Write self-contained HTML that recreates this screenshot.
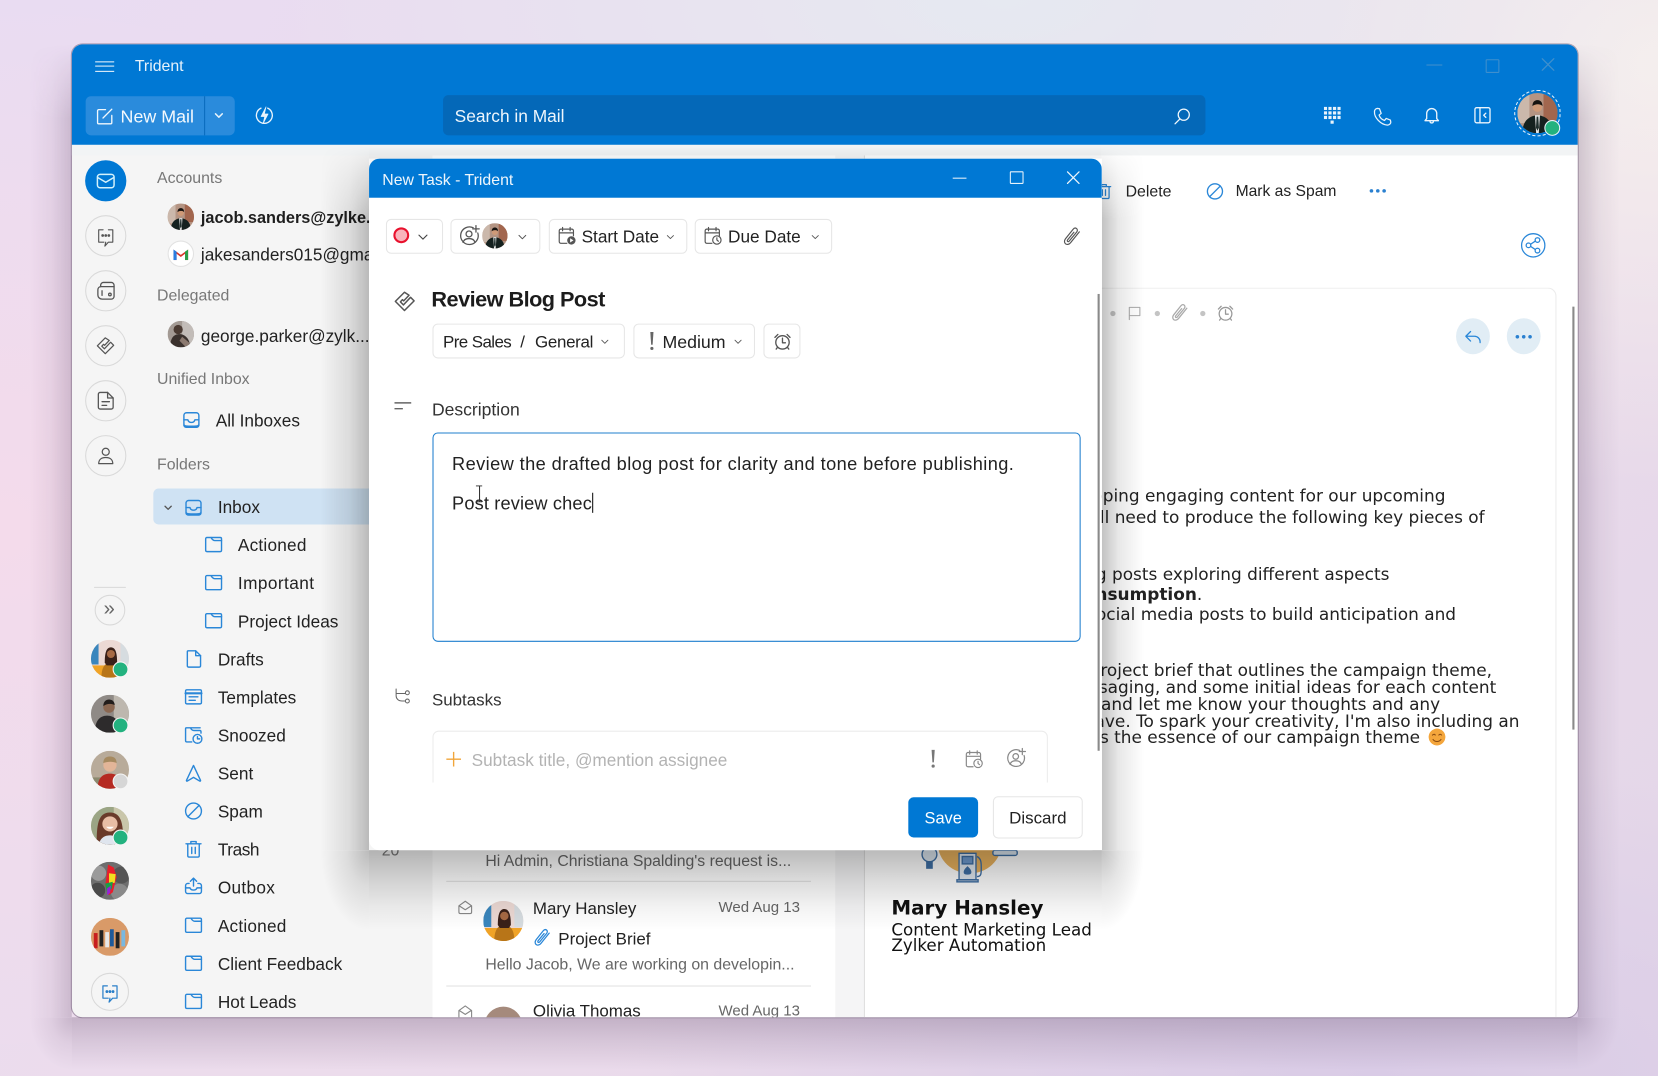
<!DOCTYPE html>
<html lang="en">
<head>
<meta charset="utf-8">
<title>Trident</title>
<style>
html,body{margin:0;padding:0;width:1658px;height:1076px;overflow:hidden;background:#eadff0}
#s{position:absolute;left:0;top:0;width:1568px;height:1018px;transform:scale(1.0574);transform-origin:0 0;overflow:hidden;font-family:"Liberation Sans",sans-serif;color:#222;
background:
radial-gradient(600px 500px at 0 500px,#f4dbeb 0,rgba(244,219,235,0) 100%),
radial-gradient(700px 300px at 950px 0,#e6e9f1 0,rgba(230,233,241,0) 100%),
radial-gradient(500px 400px at 1568px 60px,#f6efed 0,rgba(246,239,237,0) 100%),
radial-gradient(700px 300px at 1300px 1018px,#d9cbe6 0,rgba(217,203,230,0) 100%),
linear-gradient(135deg,#e9dcf2 0,#ecdcec 50%,#e3d6e8 100%)}
.t{position:absolute;white-space:nowrap;transform:translateY(-50%);line-height:1.2}
.i{position:absolute;transform:translate(-50%,-50%);fill:none;stroke:currentColor;stroke-width:1.6;stroke-linecap:round;stroke-linejoin:round;overflow:visible}
.a{position:absolute;transform:translate(-50%,-50%);border-radius:50%;overflow:hidden;display:block}
.c{position:absolute;transform:translate(-50%,-50%);border-radius:50%;border:1px solid #d9d9d9;box-sizing:border-box}
.d{position:absolute;transform:translate(-50%,-50%);border-radius:50%;width:13px;height:13px;background:#23b27f;border:1px solid #f5f5f5;box-sizing:content-box}
.g{position:absolute}
.o{position:absolute;z-index:4}
.fade-top{-webkit-mask-image:linear-gradient(to bottom,transparent,#000 70px);mask-image:linear-gradient(to bottom,transparent,#000 70px)}
.fade-x{-webkit-mask-image:linear-gradient(to right,transparent,#000 60px,#000 calc(100% - 60px),transparent);mask-image:linear-gradient(to right,transparent,#000 60px,#000 calc(100% - 60px),transparent)}
#win{position:absolute;left:68px;top:42px;width:1424px;height:920px;border-radius:10px;overflow:hidden;background:#f5f5f5;outline:1px solid rgba(90,70,100,.45);outline-offset:-.5px}
#in{position:absolute;left:-68px;top:-42px;width:1568px;height:1018px}
.f{font-size:16.3px;color:#222}
.h{font-size:15px;color:#777}
.b{color:#2a87d8}
.chip{position:absolute;box-sizing:border-box;border:1px solid #e6e6e6;border-radius:5px;background:#fff}
#modal{position:absolute;left:349px;top:150px;width:693px;height:654px;border-radius:10px;background:#fff;z-index:5;overflow:hidden}
#m{position:absolute;left:-349px;top:-150px;width:1568px;height:1018px}
.e{position:absolute;white-space:nowrap;transform:translateY(-50%);font-family:"DejaVu Sans",sans-serif;font-size:16px;color:#222;text-align:right}
</style>
</head>
<body>
<svg width="0" height="0" style="position:absolute">
<defs>
<symbol id="mail" viewBox="0 0 24 24"><rect x="3" y="5" width="18" height="14.500" rx="3"/><path d="M3.500 8.500l8.500 5 8.500-5"/></symbol>
<symbol id="chat" viewBox="0 0 24 24"><path d="M9 4H4v14h6M15 4h5v14h-5l-4 4.500 1-4.500"/><circle cx="8.500" cy="10.500" r=".9" fill="currentColor"/><circle cx="12" cy="10.500" r=".9" fill="currentColor"/><circle cx="15.500" cy="10.500" r=".9" fill="currentColor"/></symbol>
<symbol id="cal" viewBox="0 0 24 24"><path d="M6.500 7V6a3 3 0 0 1 3-3H18a3 3 0 0 1 3 3v12a3 3 0 0 1-3 3H8a4.500 4.500 0 0 1-4.500-4.500V11a3.500 3.500 0 0 1 3-3.500z"/><path d="M6.500 7.500H21M8 12v5"/><circle cx="16.500" cy="16" r="1.400"/></symbol>
<symbol id="task" viewBox="0 0 24 24"><path d="M11.500 3L2.500 12l9 9 9.500-9.500-3.500-3.500-7 7.500-3-3 2-2.200 1.200 1.200 5.300-5.500z"/></symbol>
<symbol id="note" viewBox="0 0 24 24"><path d="M6 3h8l6 6v10a2 2 0 0 1-2 2H6a2 2 0 0 1-2-2V5a2 2 0 0 1 2-2z"/><path d="M14 3v6h6M8 13h8M8 17h5"/></symbol>
<symbol id="user" viewBox="0 0 24 24"><circle cx="12" cy="7.500" r="4"/><path d="M4 21c0-5 3.500-7 8-7s8 2 8 7z"/></symbol>
<symbol id="inbox" viewBox="0 0 24 24"><path d="M6.500 4h11a3 3 0 0 1 3 3v11a2.500 2.500 0 0 1-2.500 2.500H6A2.500 2.500 0 0 1 3.500 18V7a3 3 0 0 1 3-3z"/><path d="M3.500 12H8c.5 2 2 3 4 3s3.500-1 4-3h4.500"/><path d="M4 18.500c1 1.500 15 1.500 16 0" stroke-width="2.200"/></symbol>
<symbol id="folder" viewBox="0 0 24 24"><path d="M3 5.500A1.500 1.500 0 0 1 4.500 4H9c1.500 2.500 2.500 3.500 4.500 3.500H21v11a1.500 1.500 0 0 1-1.500 1.500h-15A1.500 1.500 0 0 1 3 18.500z"/><path d="M9.500 4h10A1.500 1.500 0 0 1 21 5.500v2"/></symbol>
<symbol id="draft" viewBox="0 0 24 24"><path d="M6 3h8.500L20 8.500V20a1.500 1.500 0 0 1-1.500 1.500h-12A1.500 1.500 0 0 1 5 20V4a1 1 0 0 1 1-1z"/><path d="M14.500 3v5.500H20"/></symbol>
<symbol id="tpl" viewBox="0 0 24 24"><rect x="3" y="4" width="18" height="16" rx="1.500"/><path d="M3 8h18" stroke-width="2.500"/><path d="M7 12h10M7 16h7"/></symbol>
<symbol id="snooze" viewBox="0 0 24 24"><path d="M10 20H4.500A1.500 1.500 0 0 1 3 18.500V5a1 1 0 0 1 1-1h4.500c1 2 2 3 4 3H19a1.500 1.500 0 0 1 1.500 1.500V10M9 4h10.500"/><circle cx="16.500" cy="16.500" r="5"/><path d="M16.500 14v2.500h2.500"/></symbol>
<symbol id="sent" viewBox="0 0 24 24"><path d="M12 3.500L4 20.500c0 .5.500 1 1 .7L12 17l7 4.200c.5.300 1-.2 1-.7z"/></symbol>
<symbol id="spam" viewBox="0 0 24 24"><circle cx="12" cy="12" r="9"/><path d="M5.500 18.500L18.500 5.500"/></symbol>
<symbol id="trash" viewBox="0 0 24 24"><path d="M3.500 6h17M9 6V3.500h6V6M5.500 6v13.500a1.500 1.500 0 0 0 1.500 1.500h10a1.500 1.500 0 0 0 1.500-1.500V6M10 10v7M14 10v7"/></symbol>
<symbol id="outbox" viewBox="0 0 24 24"><path d="M7 9H5.500A2.500 2.500 0 0 0 3 11.500V18a2.500 2.500 0 0 0 2.500 2.500h13A2.500 2.500 0 0 0 21 18v-6.500A2.500 2.500 0 0 0 18.500 9H17"/><path d="M3 14h5c.5 1.500 2 2.500 4 2.500s3.500-1 4-2.500h5M12 12V3M8.500 6.500L12 3l3.500 3.500"/></symbol>
<symbol id="chev" viewBox="0 0 24 24"><path d="M5 9l7 7 7-7"/></symbol>
<symbol id="compose" viewBox="0 0 24 24"><path d="M13 4H5a1.500 1.500 0 0 0-1.500 1.500v14A1.500 1.500 0 0 0 5 21h14a1.500 1.500 0 0 0 1.500-1.500V11"/><path d="M10 14L20.500 3.500"/></symbol>
<symbol id="bolt" viewBox="0 0 24 24"><path d="M8 3.500A9.500 9.500 0 1 0 16 3.500"/><path d="M14 2L8 13.500h4.500L10.500 22 16.500 10.500H12z" fill="currentColor" stroke-width=".8"/></symbol>
<symbol id="search" viewBox="0 0 24 24"><circle cx="14" cy="10" r="7"/><path d="M9 15.500L3 21.500"/></symbol>
<symbol id="phone" viewBox="0 0 24 24"><path d="M6.500 2.500l2.500.5 2 5.500-2.500 2c1 3 3.500 5.500 6.500 6.500l2-2.500 5 2 .5 2.500c0 1.500-1.500 3.500-4 3.500C10.500 22 2.500 13.500 3 6.500c0-2 1.500-4 3.500-4z"/></symbol>
<symbol id="bell" viewBox="0 0 24 24"><path d="M6 16V10a6 6 0 0 1 12 0v6l2 2.500H4z"/><path d="M10 19.500c.3 2.200 3.700 2.200 4 0"/></symbol>
<symbol id="panel" viewBox="0 0 24 24"><rect x="3" y="3" width="18" height="18" rx="2"/><path d="M9 3v18M16 9.500L13.500 12l2.500 2.500"/></symbol>
<symbol id="clip" viewBox="0 0 24 24"><path d="M20.500 6L10 19c-1.800 2.300-4.500 2.500-6 1.300s-1.700-3.800 0-6L13 3c1.300-1.600 3-1.800 4.200-.9s1.300 2.700.1 4.200L8.500 17c-.6.800-1.500.9-2 .5s-.5-1.300.1-2L14 6.500"/></symbol>
<symbol id="alarm" viewBox="0 0 24 24"><circle cx="12" cy="13" r="8"/><path d="M12 8v5.500h3.500M3 7l3.500-3.500M21 7l-3.500-3.500M6 19l-1.500 2M18 19l1.500 2"/></symbol>
<symbol id="flag" viewBox="0 0 24 24"><path d="M4 22V3.500h16v12.500H4"/></symbol>
<symbol id="share" viewBox="0 0 24 24"><circle cx="12" cy="12" r="11"/><circle cx="7.500" cy="12" r="2.200"/><circle cx="16" cy="7" r="2.200"/><circle cx="16" cy="17" r="2.200"/><path d="M9.500 11l4.500-3M9.500 13l4.500 3"/></symbol>
<symbol id="reply" viewBox="0 0 24 24"><path d="M9 6L3 12l6 6M3 12h11a7 7 0 0 1 7 7v1"/></symbol>
<symbol id="uplus" viewBox="0 0 24 24"><path d="M16 3.300A9.500 9.500 0 1 0 21 9"/><circle cx="11.500" cy="10" r="3.200"/><path d="M5 19c1-3 3.500-4 6.500-4s5.500 1 6.500 4M19 1v7M15.500 4.500h7"/></symbol>
<symbol id="cs" viewBox="0 0 24 24"><path d="M12 21H5a2 2 0 0 1-2-2V6a2 2 0 0 1 2-2h13a2 2 0 0 1 2 2v6M3 8.500h17M7 2v4M16 2v4"/><circle cx="17.500" cy="17.500" r="5" fill="currentColor" stroke="none"/><path d="M16 15l4 2.500-4 2.500z" fill="#fff" stroke="none"/></symbol>
<symbol id="cd" viewBox="0 0 24 24"><path d="M11 21H5a2 2 0 0 1-2-2V6a2 2 0 0 1 2-2h13a2 2 0 0 1 2 2v6M3 8.500h17M7 2v4M16 2v4"/><circle cx="17" cy="17" r="5"/><path d="M17 14.500V17l1.800 1.500"/></symbol>
<symbol id="sub" viewBox="0 0 24 24"><path d="M3 3v9c0 4 3 7 8 7h4M3 9h12"/><circle cx="18" cy="8" r="2.600"/><circle cx="18" cy="19" r="2.600"/></symbol>
<symbol id="env" viewBox="0 0 24 24"><path d="M3 10l9-6.500 9 6.500v9a2 2 0 0 1-2 2H5a2 2 0 0 1-2-2z"/><path d="M3.500 10l8.500 5.500 8.500-5.500"/></symbol>
<symbol id="jacob" viewBox="0 0 40 40"><rect width="40" height="40" fill="#b49483"/><rect x="26" width="14" height="28" fill="#a2664e"/><rect width="12" height="30" fill="#cbb8ab"/><path d="M5 40c0-12 6-17 15-18 9 1 15 6 15 18z" fill="#15211f"/><path d="M17.500 22h5l-1.200 18h-2.600z" fill="#e6e6e6"/><path d="M19.200 23.500h1.600l.7 11-1.500 3-1.500-3z" fill="#20302e"/><circle cx="20" cy="14" r="4.800" fill="#cf9a78"/><path d="M15 13c0-5 3-6 5-6s5 1 5 6c-2-2.500-7-2.500-10 0z" fill="#171310"/></symbol>
<symbol id="george" viewBox="0 0 40 40"><rect width="40" height="40" fill="#a39a94"/><rect x="22" width="18" height="40" fill="#c2bcb8"/><path d="M4 40c0-14 5-20 14-20s16 8 16 20z" fill="#3a312d"/><circle cx="16" cy="13" r="7" fill="#4a3a32"/><path d="M22 24l12 10-6 6-10-10z" fill="#8c7a70"/></symbol>
<symbol id="mary" viewBox="0 0 40 40"><rect width="40" height="40" fill="#ecd9d4"/><rect width="8" height="26" fill="#3a86bd"/><rect y="27" width="40" height="13" fill="#f0a326"/><rect x="31" width="9" height="26" fill="#d6dce0"/><path d="M11 40c0-10 3-16 10-16s10 6 10 16z" fill="#b87518"/><path d="M14.500 24c0-11 2-16 6.500-16s6.500 5 6.500 16l-2 3h-9z" fill="#3a2018"/><circle cx="21" cy="15" r="4.200" fill="#a86a44"/></symbol>
<symbol id="man2" viewBox="0 0 40 40"><rect width="40" height="40" fill="#8f8a86"/><rect x="24" width="16" height="40" fill="#bdb7ae"/><path d="M4 40c0-12 5-18 13-18s14 6 14 18z" fill="#2d2b2c"/><circle cx="19" cy="13" r="6" fill="#8a6751"/><path d="M13 12c0-5 3-7 6-7s6 2 6 6c-3-2-8-2-12 1z" fill="#221d1b"/></symbol>
<symbol id="kid" viewBox="0 0 40 40"><rect width="40" height="40" fill="#b8ab9a"/><rect y="28" width="40" height="12" fill="#8c8a70"/><path d="M7 40c0-11 5-16 13-16s13 5 13 16z" fill="#b52a22"/><circle cx="20" cy="15" r="7" fill="#e2b598"/><path d="M13 13c0-6 4-7 7-7s7 1 7 7c-3-2-10-2-14 0z" fill="#a68a60"/></symbol>
<symbol id="girl" viewBox="0 0 40 40"><rect width="40" height="40" fill="#9ba585"/><rect x="24" width="16" height="40" fill="#c9c6aa"/><path d="M6 40c0-20 1-34 14-34s14 14 14 34z" fill="#6a3a2a"/><circle cx="20" cy="18" r="8" fill="#e8bda5"/><path d="M16 21c2 3 6 3 8 0z" fill="#fff"/><path d="M8 40c2-8 7-10 12-10s10 2 12 10z" fill="#dfe5ee"/></symbol>
<symbol id="art" viewBox="0 0 40 40"><rect width="40" height="40" fill="#6e6e6e"/><circle cx="8" cy="12" r="8" fill="#9a9a9a"/><circle cx="32" cy="14" r="9" fill="#555"/><circle cx="30" cy="32" r="9" fill="#8a8a8a"/><circle cx="7" cy="30" r="8" fill="#4a4a4a"/><path d="M18 3l6 3 3 10-4 16-4 3-4-10z" fill="#e81f2a"/><path d="M19 12l7 1-1 9-6 1z" fill="#f0e020"/><path d="M15 23l8-2-1 7-5 5z" fill="#18a048"/><path d="M17 28l4-3-1 8-3 2z" fill="#9a20d8"/></symbol>
<symbol id="word" viewBox="0 0 40 40"><rect width="40" height="40" fill="#d99a68"/><rect x="3" y="16" width="4" height="16" fill="#c81e1e"/><rect x="9" y="13" width="4" height="17" fill="#222"/><rect x="15" y="15" width="4" height="16" fill="#e8e8e8"/><rect x="20" y="12" width="4" height="18" fill="#1f5a9a"/><rect x="26" y="15" width="4" height="17" fill="#222"/><rect x="32" y="13" width="4" height="17" fill="#7ab8e0"/></symbol>
</defs>
</svg>

<div id="s">
<!-- window shadow strips -->
<div class="g" style="left:68px;top:962px;width:1424px;height:50px;background:linear-gradient(to bottom,rgba(70,45,80,.24),rgba(70,45,80,.12) 45%,rgba(70,45,80,0))"></div>
<div class="g fade-top" style="left:28px;top:42px;width:40px;height:920px;background:linear-gradient(to left,rgba(70,45,80,.2),rgba(70,45,80,.06) 50%,rgba(70,45,80,0))"></div>
<div class="g fade-top" style="left:1492px;top:42px;width:40px;height:920px;background:linear-gradient(to right,rgba(70,45,80,.2),rgba(70,45,80,.06) 50%,rgba(70,45,80,0))"></div>
<div class="g" style="left:28px;top:962px;width:40px;height:50px;background:radial-gradient(40px 50px at 100% 0,rgba(70,45,80,.22),rgba(70,45,80,.08) 50%,rgba(70,45,80,0))"></div>
<div class="g" style="left:1492px;top:962px;width:40px;height:50px;background:radial-gradient(40px 50px at 0 0,rgba(70,45,80,.22),rgba(70,45,80,.08) 50%,rgba(70,45,80,0))"></div>

<div id="win"><div id="in">
  <!-- header -->
  <div style="position:absolute;left:0;top:0;width:1568px;height:137px;background:#0078d4"></div>
  <div style="position:absolute;left:0;top:137px;width:1568px;height:10px;background:#f2f4f5"></div>
  <!-- panels -->
  <div style="position:absolute;left:409px;top:147px;width:381px;height:871px;background:#fff"></div>
  <div style="position:absolute;left:790px;top:147px;width:27px;height:871px;background:#f5f5f6"></div>
  <div style="position:absolute;left:817px;top:147px;width:700px;height:871px;background:#fff;border-left:1px solid #dedede"></div>

  <div style="position:absolute;left:90px;top:58px;width:18px;height:7.500px;border-top:1.200px solid #e8f3fb;border-bottom:1.200px solid #e8f3fb"><div style="height:1.200px;background:#e8f3fb;margin-top:3.200px"></div></div>
  <div class="t" style="left:127.500px;top:62.500px;font-size:15px;color:#e6f2fb">Trident</div>

  <div style="position:absolute;left:80.500px;top:90.500px;width:141px;height:37.500px;background:#2a8bdc;border-radius:5px"></div>
  <div style="position:absolute;left:192.500px;top:90.500px;width:1px;height:37.500px;background:#0a6cbd"></div>
  <svg class="i" style="left:99px;top:110px;width:19px;height:19px;color:#f1f8fd"><use href="#compose"/></svg>
  <div class="t" style="left:114px;top:111px;font-size:16.900px;color:#f4f9fd">New Mail</div>
  <svg class="i" style="left:207px;top:109px;width:11px;height:11px;color:#e8f3fb;stroke-width:3"><use href="#chev"/></svg>
  <svg class="i" style="left:250px;top:109px;width:19px;height:19px;color:#eaf4fc"><use href="#bolt"/></svg>

  <div style="position:absolute;left:419px;top:90px;width:721px;height:38px;background:#0468b8;border-radius:5px"></div>
  <div class="t" style="left:430px;top:111px;font-size:16.400px;color:#eef6fc">Search in Mail</div>
  <svg class="i" style="left:1118px;top:110px;width:18px;height:18px;color:#f1f8fd"><use href="#search"/></svg>

  <svg style="position:absolute;left:1252px;top:101px;width:16px;height:18px" fill="#e8f3fb"><rect x="0" y="0" width="3" height="3"/><rect x="4.300" y="0" width="3" height="3"/><rect x="8.600" y="0" width="3" height="3"/><rect x="12.900" y="0" width="3" height="3"/><rect x="0" y="4.300" width="3" height="3"/><rect x="4.300" y="4.300" width="3" height="3"/><rect x="8.600" y="4.300" width="3" height="3"/><rect x="12.900" y="4.300" width="3" height="3"/><rect x="0" y="8.600" width="3" height="3"/><rect x="4.300" y="8.600" width="3" height="3"/><rect x="8.600" y="8.600" width="3" height="3"/><rect x="12.900" y="8.600" width="3" height="3"/><rect x="6.300" y="13" width="3" height="3"/></svg>
  <svg class="i" style="left:1307px;top:109.500px;width:19px;height:19px;color:#eaf4fc;stroke-width:1.500"><use href="#phone"/></svg>
  <svg class="i" style="left:1354px;top:109px;width:19px;height:19px;color:#eaf4fc"><use href="#bell"/></svg>
  <svg class="i" style="left:1402px;top:109px;width:19px;height:19px;color:#eaf4fc"><use href="#panel"/></svg>

  <div style="position:absolute;left:1349px;top:61px;width:15px;height:1px;background:#3f8fcd"></div>
  <div style="position:absolute;left:1405px;top:56px;width:11px;height:11px;border:1.200px solid #3f8fcd;border-radius:1px"></div>
  <svg style="position:absolute;left:1458px;top:55px;width:12px;height:12px" stroke="#3f8fcd" stroke-width="1.200"><path d="M0 0L12 12M12 0L0 12"/></svg>

  <div style="position:absolute;left:1432px;top:85px;width:44px;height:44px;box-sizing:border-box;border:1.500px dashed #eaf4fc;border-radius:50%"></div>
  <svg class="a" style="left:1454px;top:107px;width:38px;height:38px"><use href="#jacob"/></svg>
  <div class="d" style="left:1468px;top:121px;background:#23b27f;border:1.500px solid #e8f3fb"></div>

  <!-- rail -->
  <div class="c" style="left:99.500px;top:171px;width:39px;height:39px;background:#0078d4;border:none"></div>
  <svg class="i" style="left:99.500px;top:171px;width:21px;height:21px;color:#d5f2fb"><use href="#mail"/></svg>
  <div class="c" style="left:99.500px;top:223px;width:39px;height:39px"></div>
  <svg class="i" style="left:99.500px;top:224px;width:20px;height:20px;color:#555;stroke-width:1.300"><use href="#chat"/></svg>
  <div class="c" style="left:99.500px;top:275px;width:39px;height:39px"></div>
  <svg class="i" style="left:99.500px;top:275px;width:21px;height:21px;color:#555;stroke-width:1.400"><use href="#cal"/></svg>
  <div class="c" style="left:99.500px;top:327px;width:39px;height:39px"></div>
  <svg class="i" style="left:99.500px;top:327px;width:20px;height:20px;color:#555;stroke-width:1.400"><use href="#task"/></svg>
  <div class="c" style="left:99.500px;top:379px;width:39px;height:39px"></div>
  <svg class="i" style="left:99.500px;top:379px;width:21px;height:21px;color:#555;stroke-width:1.400"><use href="#note"/></svg>
  <div class="c" style="left:99.500px;top:431px;width:39px;height:39px"></div>
  <svg class="i" style="left:99.500px;top:431px;width:20px;height:20px;color:#555;stroke-width:1.400"><use href="#user"/></svg>

  <div style="position:absolute;left:89px;top:555px;width:30px;height:1px;background:#d9d9d9"></div>
  <div class="c" style="left:104px;top:577px;width:29px;height:29px"></div>
  <div class="t" style="left:98px;top:577px;font-size:19px;color:#666">»</div>

  <svg class="a" style="left:104px;top:623px;width:36px;height:36px"><use href="#mary"/></svg><div class="d" style="left:114px;top:633px"></div>
  <svg class="a" style="left:104px;top:675px;width:36px;height:36px"><use href="#man2"/></svg><div class="d" style="left:114px;top:686px"></div>
  <svg class="a" style="left:104px;top:728px;width:36px;height:36px"><use href="#kid"/></svg><div class="d" style="left:114px;top:739px;background:#d6d6d6"></div>
  <svg class="a" style="left:104px;top:781px;width:36px;height:36px"><use href="#girl"/></svg><div class="d" style="left:114px;top:792px"></div>
  <svg class="a" style="left:104px;top:833px;width:36px;height:36px"><use href="#art"/></svg>
  <svg class="a" style="left:104px;top:886px;width:36px;height:36px"><use href="#word"/></svg>
  <div class="c" style="left:104px;top:938px;width:36px;height:36px"></div>
  <svg class="i" style="left:104px;top:939px;width:20px;height:20px;color:#2a7fc9;stroke-width:1.400"><use href="#chat"/></svg>

  <!-- folders -->
  <div class="t h" style="left:148.500px;top:169px">Accounts</div>
  <svg class="a" style="left:171px;top:205px;width:25px;height:25px"><use href="#jacob"/></svg>
  <div class="t f" style="left:190px;top:207px;font-weight:bold;font-size:15.400px;color:#1e1e1e">jacob.sanders@zylke.com</div>
  <div class="c" style="left:171px;top:240px;width:25px;height:25px;background:#fff;border-color:#e2e2e2"></div>
  <svg style="position:absolute;left:164px;top:235px;width:14px;height:11px"><path d="M0 11V1l7 5 7-5v10h-3V5L7 8 3 5v6z" fill="#d8352a"/><path d="M0 11V1l3 2v8z" fill="#2a7de0"/><path d="M11 11V3l3-2v10z" fill="#2aa04a"/></svg>
  <div class="t f" style="left:190px;top:242px">jakesanders015@gmail.com</div>
  <div class="t h" style="left:148.500px;top:280px">Delegated</div>
  <svg class="a" style="left:171px;top:316px;width:25px;height:25px"><use href="#george"/></svg>
  <div class="t f" style="left:190px;top:319px">george.parker@zylk...</div>
  <div class="t h" style="left:148.500px;top:358.500px">Unified Inbox</div>
  <svg class="i b" style="left:181px;top:397px;width:20px;height:20px"><use href="#inbox"/></svg>
  <div class="t f" style="left:204px;top:398.500px">All Inboxes</div>
  <div class="t h" style="left:148.500px;top:440px">Folders</div>

  <div style="position:absolute;left:145px;top:462px;width:240px;height:34px;background:#cfe2f3;border-radius:5px 0 0 5px"></div>
  <svg class="i" style="left:159px;top:480px;width:10px;height:10px;color:#555;stroke-width:3"><use href="#chev"/></svg>
  <svg class="i b" style="left:182.500px;top:480px;width:20px;height:20px"><use href="#inbox"/></svg>
  <div class="t f" style="left:206px;top:481px">Inbox</div>

  <svg class="i b" style="left:202px;top:515px;width:20px;height:20px"><use href="#folder"/></svg>
  <div class="t f" style="left:225px;top:517px;letter-spacing:.2px">Actioned</div>
  <svg class="i b" style="left:202px;top:551px;width:20px;height:20px"><use href="#folder"/></svg>
  <div class="t f" style="left:225px;top:553px;letter-spacing:.4px">Important</div>
  <svg class="i b" style="left:202px;top:587px;width:20px;height:20px"><use href="#folder"/></svg>
  <div class="t f" style="left:225px;top:589px">Project Ideas</div>
  <svg class="i b" style="left:182.500px;top:623px;width:20px;height:20px"><use href="#draft"/></svg>
  <div class="t f" style="left:206px;top:624.500px">Drafts</div>
  <svg class="i b" style="left:182.500px;top:659px;width:20px;height:20px"><use href="#tpl"/></svg>
  <div class="t f" style="left:206px;top:661px">Templates</div>
  <svg class="i b" style="left:183px;top:695px;width:20px;height:20px"><use href="#snooze"/></svg>
  <div class="t f" style="left:206px;top:697px">Snoozed</div>
  <svg class="i b" style="left:182.500px;top:731px;width:20px;height:20px"><use href="#sent"/></svg>
  <div class="t f" style="left:206px;top:733px">Sent</div>
  <svg class="i b" style="left:182.500px;top:767px;width:20px;height:20px"><use href="#spam"/></svg>
  <div class="t f" style="left:206px;top:769px">Spam</div>
  <svg class="i b" style="left:182.500px;top:803px;width:20px;height:20px"><use href="#trash"/></svg>
  <div class="t f" style="left:206px;top:805px;letter-spacing:-.4px">Trash</div>
  <svg class="i b" style="left:182.500px;top:838px;width:20px;height:20px"><use href="#outbox"/></svg>
  <div class="t f" style="left:206px;top:841px;letter-spacing:.3px">Outbox</div>
  <svg class="i b" style="left:182.500px;top:875px;width:20px;height:20px"><use href="#folder"/></svg>
  <div class="t f" style="left:206px;top:877px;letter-spacing:.2px">Actioned</div>
  <svg class="i b" style="left:182.500px;top:911px;width:20px;height:20px"><use href="#folder"/></svg>
  <div class="t f" style="left:206px;top:913px">Client Feedback</div>
  <svg class="i b" style="left:182.500px;top:947px;width:20px;height:20px"><use href="#folder"/></svg>
  <div class="t f" style="left:206px;top:949px">Hot Leads</div>

  <!-- mail list -->
  <div class="t" style="left:361px;top:805px;font-size:15px;color:#777">20</div>
  <div class="t" style="left:459px;top:815px;font-size:14.950px;color:#666">Hi Admin, Christiana Spalding's request is...</div>
  <div style="position:absolute;left:422px;top:833px;width:345px;height:1px;background:#e2e2e2"></div>
  <svg class="i" style="left:440px;top:858px;width:16px;height:16px;color:#888"><use href="#env"/></svg>
  <svg class="a" style="left:476px;top:871px;width:38px;height:38px"><use href="#mary"/></svg>
  <div class="t" style="left:504px;top:859.500px;font-size:16px;color:#222">Mary Hansley</div>
  <div class="t" style="left:679.500px;top:858.500px;font-size:14.200px;color:#666">Wed Aug 13</div>
  <svg class="i b" style="left:513px;top:887px;width:18px;height:18px"><use href="#clip"/></svg>
  <div class="t" style="left:528px;top:888.500px;font-size:16px;color:#222">Project Brief</div>
  <div class="t" style="left:459px;top:913px;font-size:15px;color:#666">Hello Jacob, We are working on developin...</div>
  <div style="position:absolute;left:422px;top:932px;width:345px;height:1px;background:#e2e2e2"></div>
  <svg class="i" style="left:440px;top:957px;width:16px;height:16px;color:#888"><use href="#env"/></svg>
  <div class="a" style="left:476px;top:970px;width:36px;height:36px;background:#a58a7c"></div>
  <div class="t" style="left:504px;top:957px;font-size:16px;color:#222">Olivia Thomas</div>
  <div class="t" style="left:679.500px;top:956.500px;font-size:14.200px;color:#666">Wed Aug 13</div>

  <!-- toolbar right -->
  <svg class="i b" style="left:1044px;top:181px;width:18px;height:18px"><use href="#trash"/></svg>
  <div class="t" style="left:1064.500px;top:181.500px;font-size:15px;color:#222">Delete</div>
  <svg class="i b" style="left:1149px;top:181px;width:19px;height:19px"><use href="#spam"/></svg>
  <div class="t" style="left:1168.500px;top:181.500px;font-size:14.800px;color:#222">Mark as Spam</div>
  <svg style="position:absolute;left:1295px;top:178px;width:16px;height:5px" fill="#2a80d0"><circle cx="2" cy="2.500" r="1.700"/><circle cx="8" cy="2.500" r="1.700"/><circle cx="14" cy="2.500" r="1.700"/></svg>
  <svg class="i b" style="left:1450px;top:232px;width:24px;height:24px;stroke-width:1.200"><use href="#share"/></svg>

  <!-- card -->
  <div style="position:absolute;left:1030px;top:272px;width:442px;height:760px;box-sizing:border-box;border:1px solid #ececec;border-left:none;border-radius:0 8px 0 0"></div>
  <div style="position:absolute;left:1050px;top:294px;width:5px;height:5px;border-radius:50%;background:#c4c4c4"></div>
  <svg class="i" style="left:1073px;top:296px;width:15px;height:15px;color:#aaa"><use href="#flag"/></svg>
  <div style="position:absolute;left:1092px;top:294px;width:5px;height:5px;border-radius:50%;background:#c4c4c4"></div>
  <svg class="i" style="left:1116px;top:296px;width:18px;height:18px;color:#aaa"><use href="#clip"/></svg>
  <div style="position:absolute;left:1135px;top:294px;width:5px;height:5px;border-radius:50%;background:#c4c4c4"></div>
  <svg class="i" style="left:1158.500px;top:296px;width:18px;height:18px;color:#999"><use href="#alarm"/></svg>
  <div style="position:absolute;left:1377px;top:301px;width:32px;height:34px;border-radius:50%;background:#e1edf5"></div>
  <svg class="i b" style="left:1393px;top:318px;width:18px;height:18px"><use href="#reply"/></svg>
  <div style="position:absolute;left:1425px;top:301px;width:32px;height:34px;border-radius:50%;background:#e1edf5"></div>
  <svg style="position:absolute;left:1433px;top:315.500px;width:16px;height:5px" fill="#2a80d0"><circle cx="2" cy="2.500" r="1.700"/><circle cx="8" cy="2.500" r="1.700"/><circle cx="14" cy="2.500" r="1.700"/></svg>

  <!-- email text (right-anchored) -->
  <div class="e" style="right:201px;top:469px">you are developing engaging content for our upcoming</div>
  <div class="e" style="right:164px;top:489px">launch. You'll need to produce the following key pieces of</div>
  <div class="e" style="right:254px;top:543px">A series of blog posts exploring different aspects</div>
  <div class="e" style="right:431px;top:562px"><b>consumption</b>.</div>
  <div class="e" style="right:191px;top:581px">Engaging social media posts to build anticipation and</div>
  <div class="e" style="right:157px;top:634px">I've attached a project brief that outlines the campaign theme,</div>
  <div class="e" style="right:153px;top:649.500px">key messaging, and some initial ideas for each content</div>
  <div class="e" style="right:206px;top:665.500px">review it and let me know your thoughts and any</div>
  <div class="e" style="right:131px;top:681.500px">you may have. To spark your creativity, I'm also including an</div>
  <div class="e" style="right:225px;top:696.500px">that captures the essence of our campaign theme</div>
  <svg class="a" style="left:1359px;top:696.500px;width:16px;height:16px" viewBox="0 0 16 16"><circle cx="8" cy="8" r="8" fill="#f4a63c"/><path d="M3.500 6.500c1-1.500 2.500-1.500 3 0M9.500 6.500c.7-1.500 2.200-1.500 3 0M4 10c2 3 6 3 8 0" fill="none" stroke="#8a4a10" stroke-width="1"/></svg>

  <!-- signature illustration -->
  <div style="position:absolute;left:887px;top:770px;width:60px;height:56px;border-radius:50%;background:#e9b25e"></div>
  <svg style="position:absolute;left:868px;top:796px;width:100px;height:44px" fill="none" stroke="#3e6fa5" stroke-width="1.300"><circle cx="11" cy="12" r="7" fill="#dbe6ef"/><rect x="8.500" y="19" width="5" height="6" fill="#3e6fa5"/><rect x="39" y="11" width="16" height="25" fill="#e3ebf3"/><rect x="42" y="14" width="10" height="7" fill="#6e9bd0"/><path d="M47 24c-2 2-3 3-3 5s6 2 6 0-1-3-3-5z" fill="#3e6fa5"/><path d="M56 14c4 2 4 6 4 11s0 8-4 8"/><rect x="37" y="36" width="20" height="2" fill="#b8c6d6"/><rect x="71" y="8" width="23" height="5" rx="2" fill="#dbe6ef"/></svg>
  <div class="t" style="left:843px;top:859.500px;font-family:'DejaVu Sans',sans-serif;font-weight:bold;font-size:18.800px;color:#111">Mary Hansley</div>
  <div class="t" style="left:843px;top:879.500px;font-family:'DejaVu Sans',sans-serif;font-size:15.800px;color:#111">Content Marketing Lead</div>
  <div class="t" style="left:843px;top:894.500px;font-family:'DejaVu Sans',sans-serif;font-size:15.800px;color:#111">Zylker Automation</div>

  <div style="position:absolute;left:1487px;top:290px;width:2px;height:400px;background:#8a8a8a"></div>
</div></div>

<!-- modal shadow strips, drawn over the window content -->
<div class="o" style="left:349px;top:804px;width:693px;height:76px;background:linear-gradient(to bottom,rgba(0,0,0,.27),rgba(0,0,0,.14) 38%,rgba(0,0,0,.05) 70%,rgba(0,0,0,0))"></div>
<div class="o fade-top" style="left:303px;top:137px;width:46px;height:667px;background:linear-gradient(to left,rgba(0,0,0,.24),rgba(0,0,0,.1) 40%,rgba(0,0,0,0))"></div>
<div class="o fade-top" style="left:1042px;top:137px;width:40px;height:667px;background:linear-gradient(to right,rgba(0,0,0,.24),rgba(0,0,0,.09) 40%,rgba(0,0,0,0))"></div>
<div class="o" style="left:349px;top:137px;width:693px;height:13px;background:linear-gradient(to top,rgba(0,0,0,.06),rgba(0,0,0,0))"></div>
<div class="o" style="left:303px;top:804px;width:46px;height:76px;background:radial-gradient(46px 76px at 100% 0,rgba(0,0,0,.24),rgba(0,0,0,.1) 45%,rgba(0,0,0,0))"></div>
<div class="o" style="left:1042px;top:804px;width:40px;height:76px;background:radial-gradient(40px 76px at 0 0,rgba(0,0,0,.24),rgba(0,0,0,.1) 45%,rgba(0,0,0,0))"></div>

<!-- modal -->
<div id="modal"><div id="m">
  <div style="position:absolute;left:349px;top:150px;width:693px;height:37px;background:#0078d4"></div>
  <div class="t" style="left:361.500px;top:170.500px;font-size:15px;color:#eef6fc">New Task - Trident</div>
  <div style="position:absolute;left:901px;top:168px;width:13px;height:1.300px;background:#e8f3fb"></div>
  <div style="position:absolute;left:955px;top:162px;width:11px;height:10px;border:1.300px solid #e8f3fb;border-radius:1px"></div>
  <svg style="position:absolute;left:1009px;top:162px;width:12px;height:12px" stroke="#eef6fc" stroke-width="1.200"><path d="M0 0L12 12M12 0L0 12"/></svg>

  <div class="chip" style="left:365px;top:207px;width:54px;height:33px"></div>
  <div style="position:absolute;left:371.500px;top:214.500px;width:15px;height:15px;box-sizing:border-box;border-radius:50%;background:#f9b3bb;border:2.500px solid #e8112d"></div>
  <svg class="i" style="left:399.500px;top:224px;width:13px;height:13px;color:#444;stroke-width:2"><use href="#chev"/></svg>

  <div class="chip" style="left:426px;top:207px;width:85px;height:33px"></div>
  <svg class="i" style="left:444px;top:222.500px;width:21px;height:21px;color:#555;stroke-width:1.400"><use href="#uplus"/></svg>
  <svg class="a" style="left:468px;top:223px;width:24px;height:24px"><use href="#jacob"/></svg>
  <svg class="i" style="left:493.500px;top:224px;width:11px;height:11px;color:#555;stroke-width:2"><use href="#chev"/></svg>

  <div class="chip" style="left:519px;top:207px;width:131px;height:33px"></div>
  <svg class="i" style="left:536px;top:223px;width:19px;height:19px;color:#555;stroke-width:1.400"><use href="#cs"/></svg>
  <div class="t" style="left:550px;top:224.500px;font-size:16.300px;color:#222">Start Date</div>
  <svg class="i" style="left:633.500px;top:224px;width:10px;height:10px;color:#555;stroke-width:2"><use href="#chev"/></svg>

  <div class="chip" style="left:657px;top:207px;width:130px;height:33px"></div>
  <svg class="i" style="left:674px;top:223px;width:19px;height:19px;color:#555;stroke-width:1.400"><use href="#cd"/></svg>
  <div class="t" style="left:688.500px;top:224.500px;font-size:16.300px;color:#222">Due Date</div>
  <svg class="i" style="left:771px;top:224px;width:10px;height:10px;color:#555;stroke-width:2"><use href="#chev"/></svg>

  <svg class="i" style="left:1014px;top:224px;width:19px;height:19px;color:#555;stroke-width:1.400"><use href="#clip"/></svg>

  <svg class="i" style="left:383px;top:285px;width:23px;height:23px;color:#555;stroke-width:1.500"><use href="#task"/></svg>
  <div class="t" style="left:408px;top:283.500px;font-size:20.500px;font-weight:bold;color:#1c1c1c;letter-spacing:-.5px">Review Blog Post</div>

  <div class="chip" style="left:409px;top:306px;width:182px;height:33px"></div>
  <div class="t" style="left:419px;top:323.500px;font-size:16px;color:#222;letter-spacing:-.55px">Pre Sales</div>
  <div class="t" style="left:492px;top:323.500px;font-size:16px;color:#222">/</div>
  <div class="t" style="left:506px;top:323.500px;font-size:16px;color:#222;letter-spacing:-.3px">General</div>
  <svg class="i" style="left:572px;top:323px;width:10px;height:10px;color:#555;stroke-width:2"><use href="#chev"/></svg>

  <div class="chip" style="left:599px;top:306px;width:115px;height:33px"></div>
  <svg style="position:absolute;left:614px;top:314px;width:5px;height:18px"><path d="M1 0h3L3.200 12h-1.400z" fill="#666"/><circle cx="2.500" cy="15.500" r="1.500" fill="#666"/></svg>
  <div class="t" style="left:626.500px;top:323.500px;font-size:16.800px;color:#222">Medium</div>
  <svg class="i" style="left:697.500px;top:323px;width:10px;height:10px;color:#555;stroke-width:2"><use href="#chev"/></svg>

  <div class="chip" style="left:722px;top:306px;width:35px;height:33px"></div>
  <svg class="i" style="left:739.500px;top:322.500px;width:19px;height:19px;color:#555"><use href="#alarm"/></svg>

  <svg style="position:absolute;left:373px;top:380px;width:16px;height:8px" stroke="#666" stroke-width="1.400"><path d="M0 1h16M0 6.500h8"/></svg>
  <div class="t" style="left:408.500px;top:387.800px;font-size:16.600px;color:#333">Description</div>

  <div style="position:absolute;left:408.500px;top:409px;width:613px;height:198px;box-sizing:border-box;border:1.300px solid #1f7fce;border-radius:5px;background:#fff"></div>
  <div class="t" style="left:427.500px;top:438.500px;font-size:17.200px;color:#222;letter-spacing:.4px">Review the drafted blog post for clarity and tone before publishing.</div>
  <div class="t" style="left:427.500px;top:476px;font-size:17.200px;color:#222;letter-spacing:.15px">Post review chec</div>
  <div style="position:absolute;left:560px;top:466px;width:1px;height:19px;background:#111"></div>
  <svg style="position:absolute;left:450px;top:459px;width:7px;height:17px" stroke="#333" stroke-width="1" fill="none"><path d="M0 .5h6M3.500 .5v15M0 15.500h6"/></svg>

  <svg class="i" style="left:381px;top:658px;width:17px;height:17px;color:#666;stroke-width:1.400"><use href="#sub"/></svg>
  <div class="t" style="left:408.500px;top:662.500px;font-size:16px;color:#333">Subtasks</div>

  <div style="position:absolute;left:409px;top:691px;width:582px;height:60px;box-sizing:border-box;border:1px solid #ececec;border-radius:6px"></div>
  <svg style="position:absolute;left:421.500px;top:710.500px;width:14px;height:14px" stroke="#f1a53a" stroke-width="1.300"><path d="M7 0v14M0 7h14"/></svg>
  <div class="t" style="left:446px;top:720px;font-size:16.300px;color:#b3b3b3">Subtask title, @mention assignee</div>
  <svg style="position:absolute;left:880px;top:709px;width:5px;height:18px"><path d="M1 0h3L3.200 12h-1.400z" fill="#777"/><circle cx="2.500" cy="15.500" r="1.500" fill="#777"/></svg>
  <svg class="i" style="left:920.500px;top:718px;width:19px;height:19px;color:#888;stroke-width:1.400"><use href="#cd"/></svg>
  <svg class="i" style="left:960.500px;top:717px;width:20px;height:20px;color:#888;stroke-width:1.400"><use href="#uplus"/></svg>
  <div style="position:absolute;left:349px;top:740px;width:689px;height:64px;background:#fff"></div>

  <div style="position:absolute;left:859px;top:754px;width:66px;height:38px;border-radius:5px;background:#0078d4;color:#fff;font-size:15.500px;line-height:41px;text-align:center">Save</div>
  <div class="chip" style="left:939px;top:753px;width:85px;height:40px;color:#222;font-size:16px;line-height:41px;text-align:center">Discard</div>

  <div style="position:absolute;left:1038px;top:278px;width:2px;height:432px;background:#8a8a8a"></div>
</div></div>
</div>
</body>
</html>
